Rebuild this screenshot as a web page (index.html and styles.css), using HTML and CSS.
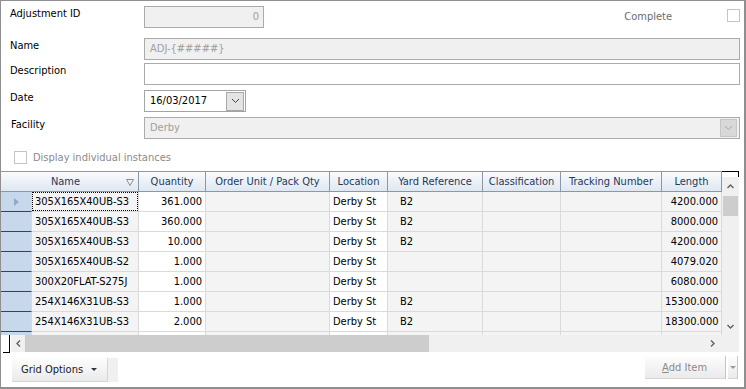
FILE: index.html
```html
<!DOCTYPE html>
<html lang="en">

<head>
  <meta charset="UTF-8">
  <title>Stock Adjustment</title>
  <link rel="stylesheet" href="styles.css">
</head>

<body>
  <div class="window">

    <div class="form">
      <div class="row row-id">
        <label class="lbl">Adjustment ID</label>
        <div class="input disabled num">0</div>
        <span class="complete-lbl">Complete</span>
        <span class="check"></span>
      </div>
      <div class="row row-name">
        <label class="lbl">Name</label>
        <div class="input disabled grow">ADJ-{#####}</div>
      </div>
      <div class="row row-desc">
        <label class="lbl">Description</label>
        <div class="input grow"></div>
      </div>
      <div class="row row-date">
        <label class="lbl">Date</label>
        <div class="input date">
          <span class="val">16/03/2017</span>
          <span class="drop">
            <svg width="9" height="6" viewBox="0 0 9 6"><path d="M1 1 L4.5 4.5 L8 1" fill="none" stroke="#444" stroke-width="1"/></svg>
          </span>
        </div>
      </div>
      <div class="row row-fac">
        <label class="lbl lbl-fac">Facility</label>
        <div class="input disabled grow combo">
          <span class="val">Derby</span>
          <span class="drop drop-off">
            <svg width="9" height="6" viewBox="0 0 9 6"><path d="M1 1 L4.5 4.5 L8 1" fill="none" stroke="#a8a8a8" stroke-width="1"/></svg>
          </span>
        </div>
      </div>
      <div class="instances">
        <span class="check"></span>
        <span>Display individual instances</span>
      </div>
    </div>

    <div class="grid">
      <div class="grid-data">
        <div class="grid-row head">
          <div class="hc hc-name">Name
            <svg class="filter" width="8" height="7" viewBox="0 0 8 7"><path d="M0.5 0.5 H7.5 L4 6.5 Z" fill="#f2f2f2" stroke="#8c8c8c" stroke-width="1"/></svg>
          </div>
          <div class="hc">Quantity</div>
          <div class="hc">Order Unit / Pack Qty</div>
          <div class="hc">Location</div>
          <div class="hc">Yard Reference</div>
          <div class="hc">Classification</div>
          <div class="hc">Tracking Number</div>
          <div class="hc">Length</div>
        </div>

        <div class="grid-row">
          <div class="ind"><span class="arrow"></span></div>
          <div class="c ro"><span class="focus">305X165X40UB-S3</span></div>
          <div class="c r">361.000</div>
          <div class="c ro"></div>
          <div class="c">Derby St</div>
          <div class="c ro yard">B2</div>
          <div class="c ro"></div>
          <div class="c ro"></div>
          <div class="c ro r">4200.000</div>
        </div>
        <div class="grid-row">
          <div class="ind"></div>
          <div class="c ro">305X165X40UB-S3</div>
          <div class="c r">360.000</div>
          <div class="c ro"></div>
          <div class="c">Derby St</div>
          <div class="c ro yard">B2</div>
          <div class="c ro"></div>
          <div class="c ro"></div>
          <div class="c ro r">8000.000</div>
        </div>
        <div class="grid-row">
          <div class="ind"></div>
          <div class="c ro">305X165X40UB-S3</div>
          <div class="c r">10.000</div>
          <div class="c ro"></div>
          <div class="c">Derby St</div>
          <div class="c ro yard">B2</div>
          <div class="c ro"></div>
          <div class="c ro"></div>
          <div class="c ro r">4200.000</div>
        </div>
        <div class="grid-row">
          <div class="ind"></div>
          <div class="c ro">305X165X40UB-S2</div>
          <div class="c r">1.000</div>
          <div class="c ro"></div>
          <div class="c">Derby St</div>
          <div class="c ro yard"></div>
          <div class="c ro"></div>
          <div class="c ro"></div>
          <div class="c ro r">4079.020</div>
        </div>
        <div class="grid-row">
          <div class="ind"></div>
          <div class="c ro">300X20FLAT-S275J</div>
          <div class="c r">1.000</div>
          <div class="c ro"></div>
          <div class="c">Derby St</div>
          <div class="c ro yard"></div>
          <div class="c ro"></div>
          <div class="c ro"></div>
          <div class="c ro r">6080.000</div>
        </div>
        <div class="grid-row">
          <div class="ind"></div>
          <div class="c ro">254X146X31UB-S3</div>
          <div class="c r">1.000</div>
          <div class="c ro"></div>
          <div class="c">Derby St</div>
          <div class="c ro yard">B2</div>
          <div class="c ro"></div>
          <div class="c ro"></div>
          <div class="c ro r">15300.000</div>
        </div>
        <div class="grid-row">
          <div class="ind"></div>
          <div class="c ro">254X146X31UB-S3</div>
          <div class="c r">2.000</div>
          <div class="c ro"></div>
          <div class="c">Derby St</div>
          <div class="c ro yard">B2</div>
          <div class="c ro"></div>
          <div class="c ro"></div>
          <div class="c ro r">18300.000</div>
        </div>
        <div class="grid-row">
          <div class="ind"></div>
          <div class="c ro"></div>
          <div class="c r"></div>
          <div class="c ro"></div>
          <div class="c"></div>
          <div class="c ro"></div>
          <div class="c ro"></div>
          <div class="c ro"></div>
          <div class="c ro r"></div>
        </div>
      </div>

      <div class="vscroll">
        <div class="vs-cap"></div>
        <div class="vs-up">
          <svg width="7" height="5" viewBox="0 0 7 5"><path d="M0.5 4 L3.5 1 L6.5 4" fill="none" stroke="#606060" stroke-width="1.4"/></svg>
        </div>
        <div class="vs-thumb"></div>
        <div class="vs-space"></div>
        <div class="vs-down">
          <svg width="7" height="5" viewBox="0 0 7 5"><path d="M0.5 1 L3.5 4 L6.5 1" fill="none" stroke="#606060" stroke-width="1.4"/></svg>
        </div>
      </div>

      <div class="hscroll-wrap">
        <div class="hs-corner"></div>
        <div class="hscroll">
          <span class="hs-left">
            <svg width="5" height="7" viewBox="0 0 5 7"><path d="M4 0.5 L1 3.5 L4 6.5" fill="none" stroke="#606060" stroke-width="1.4"/></svg>
          </span>
          <span class="hs-thumb"></span>
          <span class="hs-right">
            <svg width="5" height="7" viewBox="0 0 5 7"><path d="M1 0.5 L4 3.5 L1 6.5" fill="none" stroke="#606060" stroke-width="1.4"/></svg>
          </span>
        </div>
      </div>
    </div>

    <div class="footer">
      <div class="btn-grid">
        <span class="btn-face">Grid Options <span class="caret"></span></span>
      </div>
      <div class="add-item">
        <span class="btn-face off"><u>A</u>dd Item</span>
        <span class="split"><span class="caret off"></span></span>
      </div>
    </div>

  </div>
</body>

</html>
```

FILE: styles.css
```css
* {
  box-sizing: border-box;
}

body {
  margin: 0;
  font-family: "DejaVu Sans Condensed", "Liberation Sans", sans-serif;
  font-size: 11px;
  color: #000;
  background: #fff;
}

.window {
  width: 746px;
  height: 389px;
  border-style: solid;
  border-color: #8f8f8f;
  border-width: 1px 2px 2px 1px;
  overflow: hidden;
}

/* ---- form ---- */

.form {
  padding: 5px 4px 0 9px;
}

.row {
  display: flex;
  align-items: flex-start;
  height: 22px;
}

.row-name {
  margin-top: 10px;
}

.row-desc {
  margin-top: 3px;
}

.row-date,
.row-fac {
  margin-top: 5px;
}

.lbl {
  width: 134px;
  padding-top: 1px;
  line-height: 13px;
}

.lbl-fac {
  padding-left: 1px;
}

.input {
  height: 22px;
  border: 1px solid #ababab;
  background: #fff;
  line-height: 20px;
  padding: 0 5px;
  display: flex;
  align-items: center;
}

.input.disabled {
  background: #f0f0f0;
  color: #a0a0a0;
}

.grow {
  flex: 1;
}

.num {
  width: 120px;
  justify-content: flex-end;
  padding-right: 4px;
}

.complete-lbl {
  margin-left: auto;
  margin-top: 4px;
  margin-right: 55px;
  color: #6d6d6d;
  line-height: 13px;
}

.check {
  display: inline-block;
  width: 13px;
  height: 13px;
  border: 1px solid #c4c4c4;
  background: #fff;
}

.row-id .check {
  margin-top: 3px;
}

.date {
  width: 102px;
  padding: 0 1px 0 5px;
  border-color: #a4a4a4;
}

.combo {
  padding-right: 2px;
}

.val {
  flex: 1;
}

.drop {
  width: 18px;
  height: 19px;
  border: 1px solid #a8a8a8;
  background: #e4e4e4;
  display: flex;
  align-items: center;
  justify-content: center;
}

.drop-off {
  width: 17px;
  height: 18px;
  border-color: #c6c6c6;
  background: #d8d8d8;
}

.instances {
  display: flex;
  align-items: center;
  gap: 6px;
  margin-top: 12px;
  padding-left: 4px;
  color: #8a8a8a;
  height: 13px;
}

/* ---- grid ---- */

.grid {
  margin-top: 7px;
  width: 738px;
  display: grid;
  grid-template-columns: 721px 17px;
  grid-template-rows: 164px 17px;
}

.grid-data {
  overflow: hidden;
}

.grid-row {
  display: grid;
  grid-template-columns: 31px 107px 67px 124px 58px 95px 78px 101px 60px;
  height: 20px;
}

.grid-row.head {
  height: 21px;
}

.hc {
  border-top: 1px solid #8a98ab;
  border-bottom: 1px solid #8a98ab;
  border-right: 1px solid #8a98ab;
  background: linear-gradient(#f9fbfd, #dfe7f1);
  color: #1e395b;
  text-align: center;
  line-height: 19px;
  white-space: nowrap;
  overflow: hidden;
}

.hc-name {
  grid-column: span 2;
  position: relative;
  padding-right: 8px;
}

.filter {
  position: absolute;
  right: 4px;
  top: 7px;
}

.ind {
  background: #c7d8ed;
  border-bottom: 1px solid #2b4469;
  border-right: 1px solid #d8d8d8;
  display: flex;
  align-items: center;
  padding-left: 13px;
}

.arrow {
  width: 0;
  height: 0;
  border-top: 4px solid transparent;
  border-bottom: 4px solid transparent;
  border-left: 5px solid #92a9c7;
}

.c {
  border-right: 1px solid #dadada;
  border-bottom: 1px solid #dadada;
  background: #fff;
  line-height: 19px;
  padding: 0 3px;
  white-space: nowrap;
  overflow: hidden;
}

.c.ro {
  background: #f4f4f4;
}

.c.r {
  text-align: right;
}

.c.yard {
  padding-left: 12px;
}

.focus {
  display: block;
  margin: 0 -3px;
  padding: 0 3px;
  height: 19px;
  outline: 1px dotted #000;
  outline-offset: -1px;
}

.vscroll {
  grid-row: span 2;
  background: #f0f0f0;
  display: flex;
  flex-direction: column;
  align-items: center;
}

.vs-cap {
  width: 100%;
  height: 6px;
  border-top: 1px solid #000;
  border-right: 1px solid #000;
  background: #fff;
}

.vs-up,
.vs-down {
  height: 19px;
  display: flex;
  align-items: center;
  justify-content: center;
}

.vs-thumb {
  width: 15px;
  height: 20px;
  background: #cdcdcd;
}

.vs-space {
  flex: 0 0 101px;
}

.hscroll-wrap {
  display: flex;
}

.hs-corner {
  width: 7px;
  height: 18px;
  border-right: 1px solid #000;
  border-bottom: 1px solid #000;
  margin-left: 2px;
  background: #fff;
}

.hscroll {
  flex: 1;
  margin-left: 1px;
  height: 17px;
  background: #f0f0f0;
  display: flex;
  align-items: center;
}

.hs-left {
  width: 14px;
  display: flex;
  justify-content: center;
}

.hs-thumb {
  width: 404px;
  height: 17px;
  background: #cdcdcd;
}

.hs-right {
  margin-left: auto;
  width: 16px;
  display: flex;
  justify-content: center;
  padding-right: 4px;
}

/* ---- footer ---- */

.footer {
  display: flex;
  justify-content: space-between;
  align-items: flex-start;
  padding: 0 6px 0 11px;
  margin-top: 4px;
}

.btn-grid {
  margin-top: 2px;
  width: 106px;
  height: 24px;
  background: #f0f0f0;
}

.btn-face {
  display: flex;
  align-items: center;
  height: 24px;
  width: 96px;
  padding-left: 9px;
  background: linear-gradient(#fdfdfd, #eaeaea);
  border-right: 1px solid #d6d6d6;
  border-bottom: 1px solid #d6d6d6;
  color: #1a1a1a;
  white-space: nowrap;
}

.caret {
  display: inline-block;
  margin-left: 8px;
  width: 0;
  height: 0;
  border-left: 3px solid transparent;
  border-right: 3px solid transparent;
  border-top: 3px solid #333;
}

.caret.off {
  margin-left: 0;
  border-top-color: #9a9a9a;
}

.add-item {
  display: flex;
  gap: 2px;
  height: 23px;
}

.add-item .btn-face {
  width: 81px;
  height: 23px;
  padding-left: 17px;
  color: #8a8a8a;
  border-right-color: #c4c4c4;
}

.split {
  width: 10px;
  height: 23px;
  background: linear-gradient(#fdfdfd, #eaeaea);
  border-right: 1px solid #c8c8c8;
  border-bottom: 1px solid #d6d6d6;
  display: flex;
  align-items: center;
  justify-content: center;
}
```
